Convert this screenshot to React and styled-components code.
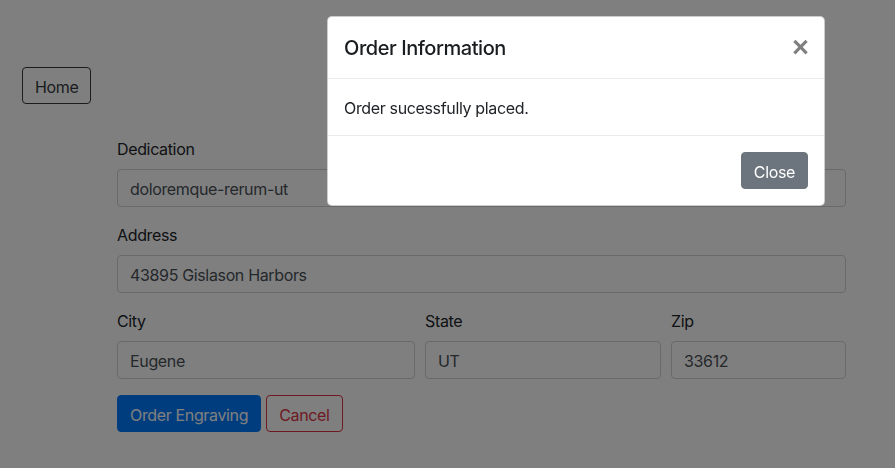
import React, { useState } from 'react'
import styled, { createGlobalStyle } from 'styled-components'

const GlobalStyle = createGlobalStyle`
    * { box-sizing: border-box; }
    body {
        margin: 0;
        background: #ffffff;
        color: #212529;
        font-family: Inter, "Noto Sans", "Liberation Sans", sans-serif;
        font-size: 16px;
        line-height: 1.5;
        letter-spacing: -0.35px;
    }
`

const Page = styled.div`
    padding: 67px 0 0 22px;
    width: 895px;
    height: 468px;
    overflow: hidden;
`

const OutlineButton = styled.button`
    font: inherit;
    letter-spacing: inherit;
    line-height: 1.5;
    padding: 6px 12px 4px;
    border-radius: 4px;
    background: transparent;
    border: 1px solid ${props => props.color};
    color: ${props => props.color};
    height: 37px;
`

const SolidButton = styled.button`
    font: inherit;
    letter-spacing: inherit;
    line-height: 1.5;
    padding: 6px 12px 4px;
    border-radius: 4px;
    border: 1px solid ${props => props.color};
    background: ${props => props.color};
    color: #ffffff;
    height: 37px;
`

const Form = styled.form`
    width: 729px;
    margin: 33px 0 0 95px;
`

const Group = styled.div`
    display: flex;
    flex-direction: column;
    margin-bottom: 16px;
`

const Row = styled.div`
    display: grid;
    grid-template-columns: 298fr 236fr 175fr;
    gap: 10px;
`

const Label = styled.label`
    margin-bottom: 8px;
`

const Input = styled.input`
    font: inherit;
    letter-spacing: inherit;
    height: 38px;
    padding: 7px 12px 5px;
    border: 1px solid #ced4da;
    border-radius: 4px;
    color: #495057;
    background: #ffffff;
    outline: none;
    width: 100%;
`

const Actions = styled.div`
    display: flex;
    gap: 5px;
`

const Backdrop = styled.div`
    position: fixed;
    inset: 0;
    background: rgba(0, 0, 0, 0.5);
`

const Modal = styled.div`
    position: fixed;
    top: 16px;
    left: 327px;
    width: 498px;
    background: #ffffff;
    border-radius: 5px;
    border: 1px solid rgba(0, 0, 0, 0.2);
`

const ModalHeader = styled.div`
    display: flex;
    justify-content: space-between;
    align-items: center;
    padding: 16px 16px 15px 16px;
    border-bottom: 1px solid #e9ecef;
`

const ModalTitle = styled.h5`
    margin: 0;
    font-size: 20px;
    font-weight: 500;
    line-height: 1.5;
    letter-spacing: -0.45px;
    color: #1a1d20;
`

const CloseX = styled.button`
    border: none;
    background: transparent;
    padding: 0;
    font-family: "Liberation Sans", sans-serif;
    font-size: 29px;
    font-weight: 700;
    line-height: 1;
    color: #000;
    opacity: 0.5;
    margin: -2px -1px 0 0;
`

const ModalBody = styled.div`
    padding: 17px 16px 15px;
`

const ModalFooter = styled.div`
    display: flex;
    justify-content: flex-end;
    padding: 12px;
    border-top: 1px solid #e9ecef;
`

const FooterButton = styled(SolidButton)`
    margin: 4px;
`

const App = () => {
    const [form] = useState({
        dedication: 'doloremque-rerum-ut',
        address: '43895 Gislason Harbors',
        city: 'Eugene',
        state: 'UT',
        zip: '33612',
    })

    return (
        <>
            <GlobalStyle />
            <Page>
                <OutlineButton color='#343a40'>Home</OutlineButton>
                <Form onSubmit={e => e.preventDefault()}>
                    <Group>
                        <Label>Dedication</Label>
                        <Input defaultValue={form.dedication} />
                    </Group>
                    <Group>
                        <Label>Address</Label>
                        <Input defaultValue={form.address} />
                    </Group>
                    <Row>
                        <Group>
                            <Label>City</Label>
                            <Input defaultValue={form.city} />
                        </Group>
                        <Group>
                            <Label>State</Label>
                            <Input defaultValue={form.state} />
                        </Group>
                        <Group>
                            <Label>Zip</Label>
                            <Input defaultValue={form.zip} />
                        </Group>
                    </Row>
                    <Actions>
                        <SolidButton color='#007bff' type='submit'>Order Engraving</SolidButton>
                        <OutlineButton color='#dc3545' type='button'>Cancel</OutlineButton>
                    </Actions>
                </Form>
            </Page>

            <Backdrop />
            <Modal>
                <ModalHeader>
                    <ModalTitle>Order Information</ModalTitle>
                    <CloseX type='button'>×</CloseX>
                </ModalHeader>
                <ModalBody>Order sucessfully placed.</ModalBody>
                <ModalFooter>
                    <FooterButton color='#6c757d' type='button'>Close</FooterButton>
                </ModalFooter>
            </Modal>
        </>
    )
}

export default App
